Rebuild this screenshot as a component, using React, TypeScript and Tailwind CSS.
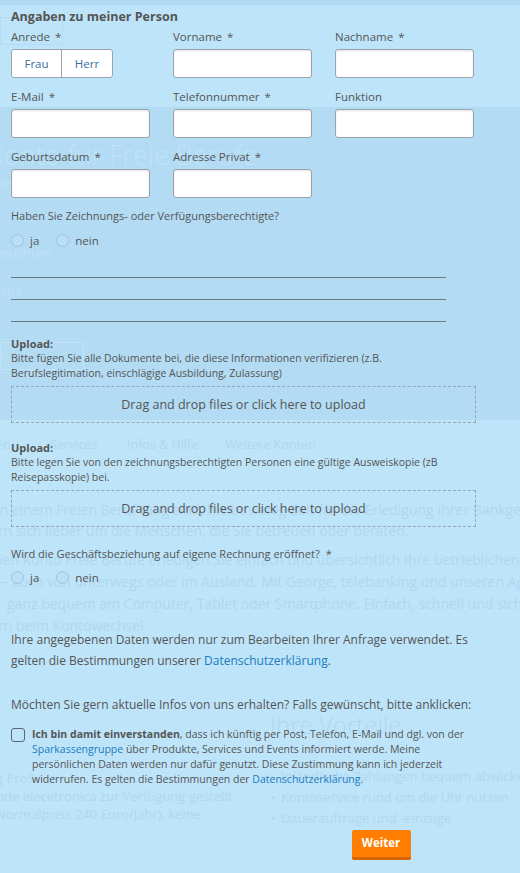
import React from 'react';

const ink = 'text-[#555]';

function Field({ label, star = true }: { label: string; star?: boolean }) {
  return (
    <div className="flex flex-col">
      <span className={`h-[20px] text-[11.5px] leading-[20px] ${ink}`}>{label}{star && <span className="ml-[5px]">*</span>}</span>
      <div className="mt-[2px] h-[29px] w-[139px] rounded-[3px] border border-[#9aa4ad] bg-white shadow-[inset_0_1px_2px_rgba(0,0,0,0.12)]" />
    </div>
  );
}

function Radio({ label }: { label: string }) {
  return (
    <span className="flex items-center gap-[6px]">
      <span className="h-[13px] w-[13px] rounded-full border border-[#9fc3dc] bg-[#b9e0f6]" />
      <span className={`text-[11.5px] ${ink}`}>{label}</span>
    </span>
  );
}

function Upload({ text }: { text: string }) {
  return (
    <div className={`text-[10.5px] leading-[15px] ${ink}`}>
      <div className="text-[11px] font-bold">Upload:</div>
      <div className="w-[440px]">{text}</div>
      <div className="mt-[5px] flex h-[37px] w-[465px] items-center justify-center border border-dashed border-[#98a6b1] text-[12.5px] text-[#555]">
        Drag and drop files or click here to upload
      </div>
    </div>
  );
}

// the page that lies under the translucent form layer
function BackgroundPage() {
  const light = 'text-[#bfe3f8]';
  const dark = 'text-[#b1d7ee]';
  return (
    <div aria-hidden className="select-none whitespace-nowrap">
      <div className="h-[5px] bg-[#b1d9f2]" />
      <div className={`h-[102px] pt-[12px] text-[13px] ${light}`}>
        <div className="flex h-[28px] w-[63px] items-center gap-[3px] border border-[#b3dbf3] pl-[2px]">
          Berufe <span className="text-[9px]">▼</span>
        </div>
        <div className="mt-[21px] flex gap-[23px] leading-[18px]">
          <span>Rechtsanwälte</span>
          <span>Steuerberater &amp; Wirtschaftsprüfer</span>
          <span>Ziviltechniker</span>
          <span>Vorteile &amp; Services</span>
        </div>
      </div>
      <div className={`h-[313px] bg-[#b3dbf3] pt-[30px] text-[13px] leading-[18px] ${light}`}>
        <div className="-ml-[12px] text-[27px] font-light leading-[36px]">Konto für Freie Berufe</div>
        <div>ue</div>
        <div className="mt-[53px]">nrichten</div>
        <div className="mt-[19px]">atis</div>
        <div className="mt-[43px] flex h-[28px] w-[84px] items-center border border-[#c0e3f8] text-[12px]">n</div>
      </div>
      <div className={`pt-[16px] ${dark}`}>
        <div className="-ml-[4px] flex text-[12.5px] leading-[18px]">
          <span className="w-[54px]">en</span>
          <span className="w-[77px]">Services</span>
          <span className="w-[98px]">Infos &amp; Hilfe</span>
          <span>Weitere Konten</span>
        </div>
        <div className="mt-[45px] -ml-[4px] text-[14px] leading-[21px]">
          <div>in einem Freien Beruf tätig sind, bleibt wenig Zeit für die Erledigung Ihrer Bankgeschäfte.</div>
          <div className="ml-[2px]">rn sich lieber um die Menschen, die Sie betreuen oder beraten.</div>
        </div>
        <div className="mt-[8px] -ml-[6px] text-[14px] leading-[22px]">
          <div>nen Konto Freie Berufe erledigen Sie einfach und übersichtlich Ihre betrieblichen Zahlungen</div>
          <div className="ml-[7px]">– auch von unterwegs oder im Ausland. Mit George, telebanking und unseren Apps</div>
          <div className="ml-[13px]">ganz bequem am Computer, Tablet oder Smartphone. Einfach, schnell und sicher.</div>
          <div className="ml-[4px]">rn beim Kontowechsel</div>
        </div>
        <div className="grid grid-cols-[270px_250px]">
          <div className="-ml-[4px] mt-[132px] text-[13px] leading-[18px]">
            <div>g ProS</div>
            <div>ude elecetronica zur Verfügung gestellt.</div>
            <div>Normalpreis 240 Euro/Jahr), keine</div>
          </div>
          <div>
            <div className="mt-[72px] text-[24px] font-light leading-[32px]">Ihre Vorteile</div>
            <ul className="mt-[25px] text-[13px] leading-[21px]">
              <li className="flex gap-[6px]"><span>•</span>Inländische Zahlungen bequem abwickeln</li>
              <li className="flex gap-[6px]"><span>•</span>Kontoservice rund um die Uhr nutzen</li>
              <li className="flex gap-[6px]"><span>•</span>Daueraufträge und -einzüge</li>
            </ul>
          </div>
        </div>
      </div>
    </div>
  );
}

function Form() {
  return (
    <div className="px-[11px] pt-[8px]">
      <h2 className={`text-[12.5px] font-bold leading-[18px] ${ink}`}>Angaben zu meiner Person</h2>
      <div className="mt-[1px] grid grid-cols-[139px_139px_139px] gap-x-[23px] gap-y-[9px]">
        <div className="flex flex-col">
          <span className={`h-[20px] text-[11.5px] leading-[20px] ${ink}`}>Anrede<span className="ml-[5px]">*</span></span>
          <div className="mt-[2px] flex h-[29px] w-[102px] rounded-[3px] border border-[#9aa4ad] bg-white text-[11.5px] text-[#3b6e9c]">
            <span className="flex w-1/2 items-center justify-center border-r border-[#9aa4ad]">Frau</span>
            <span className="flex w-1/2 items-center justify-center">Herr</span>
          </div>
        </div>
        <Field label="Vorname" />
        <Field label="Nachname" />
        <Field label="E-Mail" />
        <Field label="Telefonnummer" />
        <Field label="Funktion" star={false} />
        <Field label="Geburtsdatum" />
        <Field label="Adresse Privat" />
      </div>

      <p className={`mt-[10px] text-[11px] leading-[16px] ${ink}`}>Haben Sie Zeichnungs- oder Verfügungsberechtigte?</p>
      <div className="mt-[8px] flex gap-[17px]">
        <Radio label="ja" />
        <Radio label="nein" />
      </div>

      <div className="mt-[28px] flex w-[435px] flex-col gap-[21px]">
        <div className="h-px bg-[#6d7a84]" />
        <div className="h-px bg-[#6d7a84]" />
        <div className="h-px bg-[#6d7a84]" />
      </div>

      <div className="mt-[14px]">
        <Upload text="Bitte fügen Sie alle Dokumente bei, die diese Informationen verifizieren (z.B. Berufslegitimation, einschlägige Ausbildung, Zulassung)" />
      </div>
      <div className="mt-[17px]">
        <Upload text="Bitte legen Sie von den zeichnungsberechtigten Personen eine gültige Ausweiskopie (zB Reisepasskopie) bei." />
      </div>

      <p className={`mt-[19px] text-[11px] leading-[16px] ${ink}`}>Wird die Geschäftsbeziehung auf eigene Rechnung eröffnet?<span className="ml-[6px]">*</span></p>
      <div className="mt-[7px] flex gap-[17px]">
        <Radio label="ja" />
        <Radio label="nein" />
      </div>

      <p className={`mt-[42px] w-[470px] text-[12px] leading-[21px] ${ink}`}>
        Ihre angegebenen Daten werden nur zum Bearbeiten Ihrer Anfrage verwendet. Es gelten die Bestimmungen unserer <span className="text-[#1b7cc0]">Datenschutzerklärung</span>.
      </p>

      <p className={`mt-[23px] text-[12px] leading-[21px] ${ink}`}>Möchten Sie gern aktuelle Infos von uns erhalten? Falls gewünscht, bitte anklicken:</p>

      <div className="mt-[12px] flex gap-[7px]">
        <span className="mt-[1px] h-[14px] w-[14px] shrink-0 rounded-[3px] border-[1.5px] border-[#5c6670]" />
        <p className={`w-[440px] text-[10.5px] leading-[15px] ${ink}`}>
          <b>Ich bin damit einverstanden</b>, dass ich künftig per Post, Telefon, E-Mail und dgl. von der <span className="text-[#1b7cc0]">Sparkassengruppe</span> über Produkte, Services und Events informiert werde. Meine persönlichen Daten werden nur dafür genutzt. Diese Zustimmung kann ich jederzeit widerrufen. Es gelten die Bestimmungen der <span className="text-[#1b7cc0]">Datenschutzerklärung</span>.
        </p>
      </div>

      <div className="mt-[43px] flex justify-center pl-[242px]">
        <button type="button" className="h-[30px] w-[59px] rounded-[2px] border-b-[3px] border-[#d8640a] bg-[#ff7d00] text-[11.5px] font-bold text-white">
          Weiter
        </button>
      </div>
    </div>
  );
}

export default function App() {
  return (
    <div className="relative h-[873px] w-[520px] overflow-hidden bg-[#bde4f9] font-['Open_Sans',sans-serif]">
      <BackgroundPage />
      <div className="absolute inset-0">
        <Form />
      </div>
    </div>
  );
}
